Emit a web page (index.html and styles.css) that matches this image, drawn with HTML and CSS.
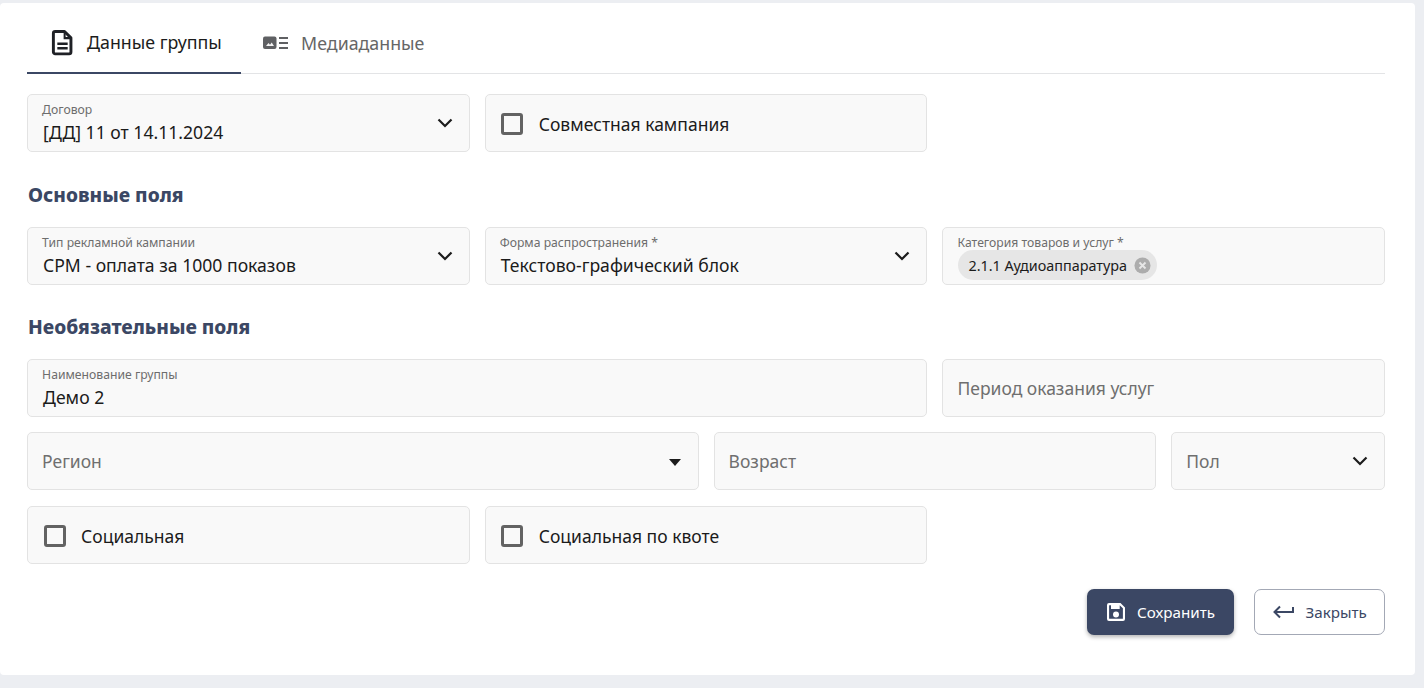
FILE: index.html
```html
<!DOCTYPE html>
<html lang="ru">
<head>
<meta charset="utf-8">
<title>Данные группы</title>
<link rel="stylesheet" href="styles.css">
</head>
<body>
<main class="card">
  <nav class="tabs">
    <div class="tab active">
      <svg class="tab-icon" viewBox="0 0 24 24" width="27" height="27"><path fill="none" stroke="#1f2126" stroke-width="2.6" stroke-linejoin="round" d="M5.500 2.200h8.300l5.700 5.700v12.600a1.600 1.600 0 0 1-1.600 1.600H5.500a1.600 1.600 0 0 1-1.600-1.600V3.800a1.600 1.600 0 0 1 1.600-1.600z"/><path fill="#1f2126" d="M13 2.500h1.800v4.700h4.700V9H13zM7.400 12h9.200v2.200H7.400zM7.400 16h9.200v2.200H7.400z"/></svg>
      <span>Данные группы</span>
    </div>
    <div class="tab">
      <svg class="tab-icon media" viewBox="0 0 26 14" width="26" height="14"><rect x="0" y="0.500" width="13.500" height="12.500" rx="2" fill="#5f6063"/><path fill="#f4f4f4" d="M3 10l2.500-3 1.500 1.700 1.700-2.200L11 10z"/><path fill="#5f6063" d="M16 1h9v2h-9zM16 6h9v2h-9zM16 11h9v2h-9z"/></svg>
      <span>Медиаданные</span>
    </div>
  </nav>

  <div class="grid first">
    <div class="field span-2 labelled">
      <label>Договор</label>
      <div class="value">[ДД] 11 от 14.11.2024</div>
      <svg class="chevron" viewBox="0 0 16 10" width="16" height="10"><path d="M1.500 1.500L8 8l6.500-6.500" fill="none" stroke="#1c1c1c" stroke-width="2.200"/></svg>
    </div>
    <div class="field span-2 check"><span class="box"></span><span>Совместная кампания</span></div>
  </div>

  <h2 class="section">Основные поля</h2>
  <div class="grid">
    <div class="field span-2 labelled">
      <label>Тип рекламной кампании</label>
      <div class="value">CPM - оплата за 1000 показов</div>
      <svg class="chevron" viewBox="0 0 16 10" width="16" height="10"><path d="M1.500 1.500L8 8l6.500-6.500" fill="none" stroke="#1c1c1c" stroke-width="2.200"/></svg>
    </div>
    <div class="field span-2 labelled">
      <label>Форма распространения *</label>
      <div class="value">Текстово-графический блок</div>
      <svg class="chevron" viewBox="0 0 16 10" width="16" height="10"><path d="M1.500 1.500L8 8l6.500-6.500" fill="none" stroke="#1c1c1c" stroke-width="2.200"/></svg>
    </div>
    <div class="field span-2 labelled">
      <label>Категория товаров и услуг *</label>
      <div class="chip">
        <span>2.1.1 Аудиоаппаратура</span>
        <svg viewBox="0 0 18 18" width="17" height="17"><circle cx="9" cy="9" r="8.500" fill="#acacac"/><path d="M5.800 5.800l6.400 6.400M12.200 5.800l-6.400 6.400" stroke="#e6e6e6" stroke-width="2"/></svg>
      </div>
    </div>
  </div>

  <h2 class="section second">Необязательные поля</h2>
  <div class="grid">
    <div class="field span-4 labelled">
      <label>Наименование группы</label>
      <div class="value">Демо 2</div>
    </div>
    <div class="field span-2 placeholder">Период оказания услуг</div>
    <div class="field span-3 placeholder">Регион<span class="caret"></span></div>
    <div class="field span-2 placeholder">Возраст</div>
    <div class="field span-1 placeholder">Пол
      <svg class="chevron" viewBox="0 0 16 10" width="16" height="10"><path d="M1.500 1.500L8 8l6.500-6.500" fill="none" stroke="#1c1c1c" stroke-width="2.200"/></svg>
    </div>
    <div class="field span-2 check lower"><span class="box"></span><span>Социальная</span></div>
    <div class="field span-2 check lower"><span class="box"></span><span>Социальная по квоте</span></div>
  </div>

  <div class="actions">
    <button class="btn primary" type="button">
      <svg viewBox="0 0 20 20" width="20" height="20"><path fill="#fff" fill-rule="evenodd" d="M3 1h11.500L19 5.500V17a2 2 0 0 1-2 2H3a2 2 0 0 1-2-2V3a2 2 0 0 1 2-2zm.5 2.200a.4.400 0 0 0-.4.400v12.800c0 .3.200.4.400.4h13c.3 0 .4-.2.400-.4V6.300l-3.200-3.100V7H5V3.200zM10 9.500a3 3 0 1 1 0 6 3 3 0 0 1 0-6z"/></svg>
      <span>Сохранить</span>
    </button>
    <button class="btn outline" type="button">
      <svg viewBox="0 0 22 14" width="22" height="14"><path fill="none" stroke="#3b4764" stroke-width="2" d="M21 2v5H3M8 1.500L2.500 7 8 12.500"/></svg>
      <span>Закрыть</span>
    </button>
  </div>
</main>
</body>
</html>
```
FILE: styles.css
```css
* { box-sizing: border-box; }
html, body { margin: 0; height: 688px; overflow: hidden; }
body {
  background: #eceef2;
  font-family: "Noto Sans", "Open Sans", sans-serif;
  padding: 3px 9px 13px 0;
  color: #1b1b1b;
}
.card {
  background: #fff;
  height: 672px;
  border-radius: 4px;
  padding: 13px 29.9px 0 27.1px;
}
.tabs {
  display: flex;
  height: 58px;
  border-bottom: 1px solid #e3e4e6;
}
.tab {
  display: flex;
  align-items: center;
  height: 58px;
  font-size: 17.8px;
  color: #666;
  padding-left: 22px;
  gap: 12px;
  padding-bottom: 4px;
}
.tab.active {
  width: 214px;
  color: #1c1c1c;
  border-bottom: 2px solid #3b4764;
  gap: 11px;
}
.tab-icon { flex: none; }
.tab .media { margin-top: -1px; }
.grid {
  display: grid;
  grid-template-columns: repeat(6, 1fr);
  column-gap: 15px;
  row-gap: 15px;
}
.grid.first { margin-top: 20px; }
.span-1 { grid-column: span 1; }
.span-2 { grid-column: span 2; }
.span-3 { grid-column: span 3; }
.span-4 { grid-column: span 4; }
.field {
  position: relative;
  height: 58px;
  background: #f9f9f9;
  border: 1px solid #e3e3e3;
  border-radius: 5px;
  padding: 0 14px;
  font-size: 17.5px;
}
.labelled label {
  display: block;
  font-size: 12.2px;
  line-height: 14px;
  color: #6d6d6d;
  margin-top: 8px;
}
.value {
  font-size: 17.6px;
  line-height: 24px;
  margin-left: 1px;
  margin-top: 3px;
  color: #1b1b1b;
}
.chevron {
  position: absolute;
  right: 16px;
  top: 23px;
}
.check {
  display: flex;
  align-items: center;
  gap: 15.5px;
  padding-left: 15.5px;
  padding-top: 2px;
  color: #1b1b1b;
}
.box {
  width: 22px;
  height: 22px;
  border: 3px solid #636363;
  border-radius: 3px;
  flex: none;
}
.lower { margin-top: 1px; }
.placeholder {
  display: flex;
  align-items: center;
  color: #6f6f6f;
}
.caret {
  position: absolute;
  right: 17px;
  top: 26px;
  border-left: 6.500px solid transparent;
  border-right: 6.500px solid transparent;
  border-top: 7px solid #1c1c1c;
}
.section {
  margin: 0 0 0 1px;
  font-size: 19.2px;
  line-height: 26px;
  font-weight: 800;
  color: #3b4764;
  padding-top: 30px;
  padding-bottom: 19px;
}
.section.second { padding-top: 29px; padding-bottom: 19px; }
.chip {
  display: inline-flex;
  align-items: center;
  height: 30px;
  margin-left: 1px;
  padding: 0 6px 0 10px;
  border-radius: 15px;
  background: #e6e6e6;
  font-size: 14.400px;
  color: #1b1b1b;
  gap: 7px;
}
.actions {
  display: flex;
  justify-content: flex-end;
  gap: 20px;
  margin-top: 25px;
}
.btn {
  display: flex;
  align-items: center;
  justify-content: center;
  height: 46px;
  border-radius: 7px;
  font: inherit;
  font-size: 15.200px;
  padding: 0;
}
.btn.primary {
  width: 147px;
  background: #3b4764;
  color: #fff;
  border: 0;
  box-shadow: 0 2px 4px rgba(0,0,0,.3);
  gap: 11px;
}
.btn.outline {
  width: 131px;
  background: #fff;
  color: #3b4764;
  border: 1px solid #a3a8b5;
  gap: 11px;
}
```
